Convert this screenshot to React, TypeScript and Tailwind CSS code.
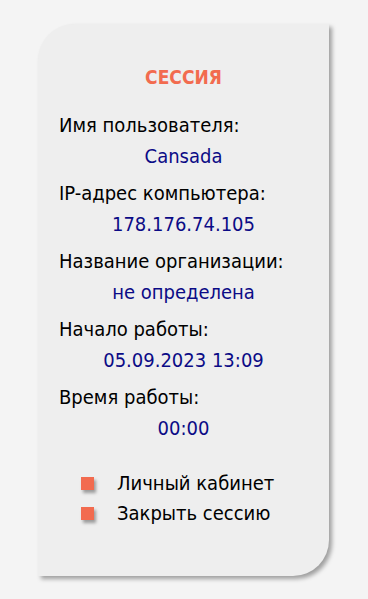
const ROWS = [
  { label: "Имя пользователя:", value: "Cansada" },
  { label: "IP-адрес компьютера:", value: "178.176.74.105" },
  { label: "Название организации:", value: "не определена" },
  { label: "Начало работы:", value: "05.09.2023 13:09" },
  { label: "Время работы:", value: "00:00" },
];

const LINKS = ["Личный кабинет", "Закрыть сессию"];

export default function App() {
  return (
    <div
      className="min-h-[599px] w-full bg-[#f4f4f4] pt-[24px]"
      style={{ fontFamily: '"DejaVu Sans Condensed", "DejaVu Sans", Tahoma, sans-serif' }}
    >
      <div className="ml-[38px] h-[552px] w-[291px] rounded-tl-[36px] rounded-br-[36px] bg-[#eeeeee] pt-[41px] shadow-[3px_3px_4px_rgba(0,0,0,0.35)]">
        <h2 className="text-center text-[19px] font-bold leading-[24px] text-[#f26b4f]">СЕССИЯ</h2>

        <div className="mt-[21px]">
          {ROWS.map((row) => (
            <div key={row.label} className="mb-[6px]">
              <div className="pl-[21px] text-[20px] leading-[31px] text-black">{row.label}</div>
              <div className="text-center text-[20px] leading-[31px] text-[#0b0b86]">{row.value}</div>
            </div>
          ))}
        </div>

        <ul className="mt-[24px] pl-[43px]">
          {LINKS.map((link) => (
            <li key={link} className="flex h-[30px] items-center text-[20px] text-black">
              <span className="mr-[23px] h-[13px] w-[13px] shrink-0 bg-[#f26b4f] shadow-[2px_3px_3px_rgba(0,0,0,0.35)]" />
              <a href="#" className="leading-[30px]">{link}</a>
            </li>
          ))}
        </ul>
      </div>
    </div>
  );
}
